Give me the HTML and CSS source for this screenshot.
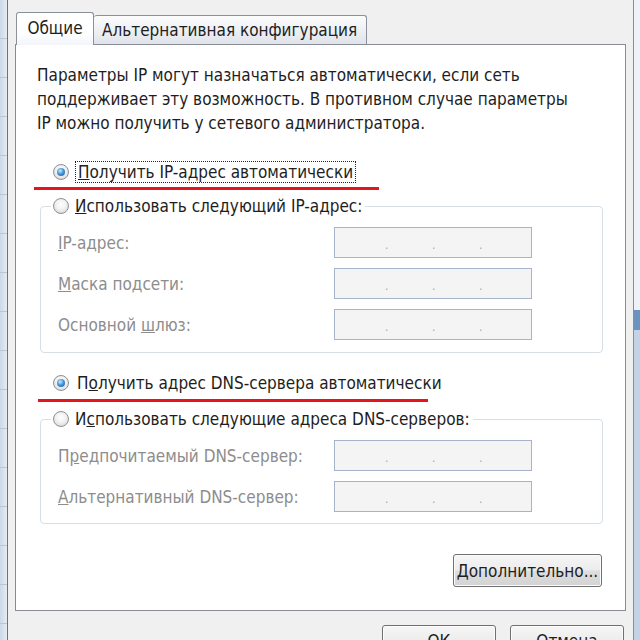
FILE: index.html
```html
<!DOCTYPE html>
<html lang="ru">
<head>
<meta charset="utf-8">
<title>Свойства: Протокол Интернета версии 4</title>
<link rel="stylesheet" href="styles.css">
</head>
<body>
<div class="screen">
  <div class="bg-left"></div>
  <div class="dialog">
    <div class="tabs">
      <div class="tab active">Общие</div>
      <div class="tab">Альтернативная конфигурация</div>
    </div>
    <div class="panel">
      <p class="intro">Параметры IP могут назначаться автоматически, если сеть<br>поддерживает эту возможность. В противном случае параметры<br>IP можно получить у сетевого администратора.</p>

      <div class="radio-row">
        <span class="radio checked"></span>
        <span class="focus"><u>П</u>олучить IP-адрес автоматически</span>
      </div>
      <div class="redline redline-1"></div>

      <fieldset class="group">
        <legend class="legend"><span class="radio"></span><span><u>И</u>спользовать следующий IP-адрес:</span></legend>
        <div class="rows rows-ip">
          <div class="row"><span class="lbl"><u>I</u>P-адрес:</span><span class="ipfield"><i>.</i><i>.</i><i>.</i></span></div>
          <div class="row"><span class="lbl"><u>М</u>аска подсети:</span><span class="ipfield"><i>.</i><i>.</i><i>.</i></span></div>
          <div class="row"><span class="lbl">Основной <u>ш</u>люз:</span><span class="ipfield"><i>.</i><i>.</i><i>.</i></span></div>
        </div>
      </fieldset>

      <div class="radio-row radio-row-dns">
        <span class="radio checked"></span>
        <span class="plain">П<u>о</u>лучить адрес DNS-сервера автоматически</span>
      </div>
      <div class="redline redline-2"></div>

      <fieldset class="group group-dns">
        <legend class="legend"><span class="radio"></span><span>И<u>с</u>пользовать следующие адреса DNS-серверов:</span></legend>
        <div class="rows rows-dns">
          <div class="row"><span class="lbl">П<u>р</u>едпочитаемый DNS-сервер:</span><span class="ipfield"><i>.</i><i>.</i><i>.</i></span></div>
          <div class="row"><span class="lbl"><u>А</u>льтернативный DNS-сервер:</span><span class="ipfield"><i>.</i><i>.</i><i>.</i></span></div>
        </div>
      </fieldset>

      <div class="adv-wrap">
        <button class="btn btn-adv"><u>Д</u>ополнительно...</button>
      </div>
    </div>
    <div class="footer">
      <button class="btn btn-foot">ОК</button>
      <button class="btn btn-foot">Отмена</button>
    </div>
  </div>
  <div class="bg-right"></div>
</div>
</body>
</html>
```
FILE: styles.css
```css
* { box-sizing: border-box; }
html, body { margin: 0; padding: 0; }
body {
  width: 640px;
  height: 640px;
  overflow: hidden;
  background: #f0f0f0;
  font-family: "DejaVu Sans Condensed", "DejaVu Sans", sans-serif;
  font-size: 17px;
  color: #1e1e1e;
}
.screen {
  display: flex;
  height: 640px;
}
.bg-left {
  width: 7px;
  flex: none;
  background:
    repeating-linear-gradient(180deg, transparent 0 38px, #b9c6d6 38px 39px),
    linear-gradient(90deg, #cbd8e8, #e4ecf5);
}
.bg-right {
  width: 6px;
  flex: none;
  background: linear-gradient(180deg, #eef1f5 0 310px, #6b93bf 310px 330px, #c3d3e5 330px 100%);
}
.dialog {
  width: 627px;
  flex: none;
  border-left: 1px solid #6f7379;
  border-right: 1px solid #8a8d92;
  background: #f0f0f0;
  padding: 12px 7px 0 7px;
  display: flex;
  flex-direction: column;
}
.tabs {
  display: flex;
  align-items: flex-end;
  padding-left: 1px;
  height: 33px;
  position: relative;
  z-index: 1;
}
.tab {
  height: 29px;
  padding: 0 9px 0 8px;
  border: 1px solid #8c9099;
  border-bottom: none;
  border-left: none;
  border-radius: 3px 3px 0 0;
  background: linear-gradient(180deg, #fcfcfd 0%, #eef0f4 50%, #dfe3ea 100%);
  display: flex;
  align-items: center;
  white-space: nowrap;
}
.tab.active {
  height: 33px;
  width: 78px;
  padding: 0 0 2px 0;
  justify-content: center;
  border-left: 1px solid #8c9099;
  background: linear-gradient(180deg, #ffffff 0%, #ffffff 60%, #f3f5fa 100%);
  margin-bottom: -1px;
}
.panel {
  width: 611px;
  height: 567px;
  flex: none;
  background: #fff;
  border: 1px solid #898c95;
  padding: 18px 0 0 0;
  display: flex;
  flex-direction: column;
}
.intro {
  margin: 0 0 0 21px;
  line-height: 24px;
  white-space: nowrap;
}
.radio-row {
  display: flex;
  align-items: center;
  height: 24px;
  margin: 25px 0 0 37px;
  gap: 6px;
  white-space: nowrap;
}
.radio-row-dns { margin-top: 18px; gap: 8px; }
.radio {
  width: 16px;
  height: 16px;
  flex: none;
  border-radius: 50%;
  border: 1px solid #8e9194;
  background: radial-gradient(circle at 50% 40%, #ffffff 0%, #f1f1f1 45%, #cdcfd2 100%);
  display: inline-flex;
  align-items: center;
  justify-content: center;
}
.radio.checked::after {
  content: "";
  width: 8px;
  height: 8px;
  border-radius: 50%;
  background: radial-gradient(circle at 40% 35%, #c9ecff 0%, #4797dc 45%, #1c4f8c 100%);
}
.focus {
  height: 22px;
  line-height: 20px;
  border: 1px dotted #222;
  padding: 0 2px;
}
.plain { line-height: 22px; }
.redline {
  height: 3px;
  background: #e3161d;
}
.redline-1 { margin: 3px 0 0 18px; width: 345px; }
.redline-2 { margin: 4px 0 0 22px; width: 390px; }
.group {
  margin: 4px 0 0 24px;
  width: 563px;
  padding: 0;
  border: 1px solid #d6dee6;
  border-radius: 4px;
  min-width: 0;
}
.group-dns { margin-top: 5px; }
.legend {
  margin-left: 10px;
  padding: 0 3px 0 2px;
  height: 24px;
  display: flex;
  align-items: center;
  gap: 6px;
  white-space: nowrap;
}
.rows {
  display: flex;
  flex-direction: column;
  gap: 10px;
  padding: 9px 0 12px 17px;
}
.rows-dns { padding-bottom: 11px; }
.row {
  display: flex;
  align-items: center;
  height: 31px;
}
.lbl {
  width: 276px;
  color: #8d8d8d;
  white-space: nowrap;
}
.ipfield {
  width: 198px;
  height: 31px;
  border: 1px solid #a5b4c9;
  background: #f4f4f4;
  display: flex;
  align-items: flex-end;
  padding: 0 0 6px 50px;
  gap: 44px;
}
.ipfield i {
  font-style: normal;
  color: #a8a8a8;
  font-size: 12px;
  line-height: 12px;
  width: 3px;
}
.adv-wrap {
  display: flex;
  justify-content: flex-end;
  margin: 30px 23px 0 0;
}
.btn {
  font-family: inherit;
  font-size: 17px;
  color: #1e1e1e;
  border: 1px solid #707070;
  border-radius: 3px;
  background: linear-gradient(180deg, #f6f6f6 0%, #ececec 48%, #dedede 52%, #d3d3d3 100%);
  box-shadow: inset 0 0 0 1px #fcfcfc;
  padding: 0;
}
.btn-adv {
  width: 149px;
  height: 33px;
}
.footer {
  display: flex;
  justify-content: flex-end;
  gap: 14px;
  padding: 14px 2px 0 0;
}
.btn-foot {
  width: 114px;
  height: 34px;
  padding: 5px 0 0 0;
  line-height: 20px;
  display: flex;
  justify-content: center;
  align-items: flex-start;
}
```
